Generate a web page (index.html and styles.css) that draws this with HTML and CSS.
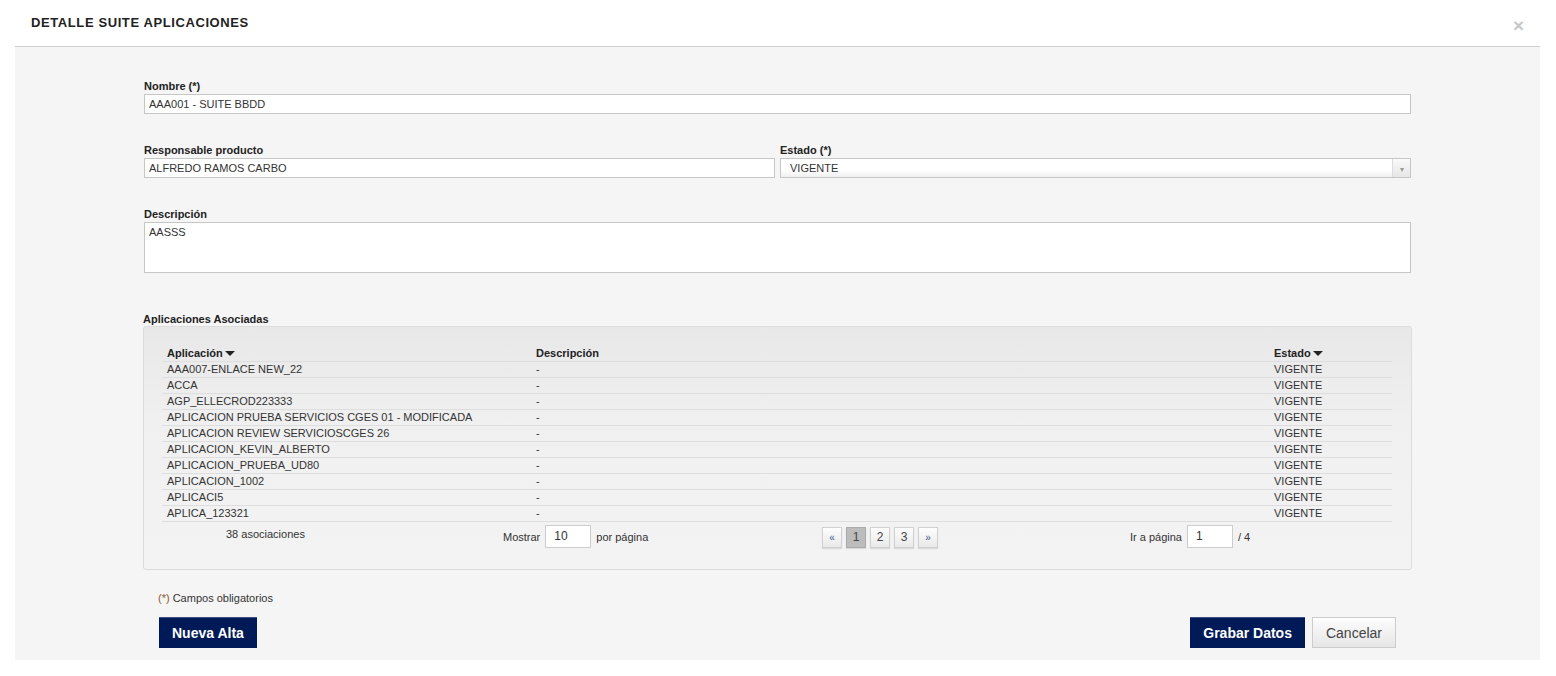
FILE: index.html
```html
<!DOCTYPE html>
<html lang="es">
<head>
    <meta charset="UTF-8">
    <title>Detalle Suite Aplicaciones</title>
    <link rel="stylesheet" href="styles.css">
</head>
<body>

    <div class="dialog">
        <!-- Cabecera -->
        <div class="dialog-header">
            <h1>DETALLE SUITE APLICACIONES</h1>
            <span class="close">&times;</span>
        </div>

        <!-- Cuerpo -->
        <div class="dialog-body">
            <div class="form">
                <div class="field">
                    <label>Nombre (*)</label>
                    <div class="input">AAA001 - SUITE BBDD</div>
                </div>

                <div class="field-row">
                    <div class="field">
                        <label>Responsable producto</label>
                        <div class="input">ALFREDO RAMOS CARBO</div>
                    </div>
                    <div class="field">
                        <label>Estado (*)</label>
                        <div class="select">
                            <span>VIGENTE</span>
                            <span class="select-arrow">&#9662;</span>
                        </div>
                    </div>
                </div>

                <div class="field field-desc">
                    <label>Descripción</label>
                    <div class="textarea">AASSS</div>
                </div>

                <div class="section-title">Aplicaciones Asociadas</div>
                <div class="panel">
                    <table class="grid">
                        <thead>
                            <tr>
                                <th class="col-app">Aplicación <span class="sort"></span></th>
                                <th class="col-desc">Descripción</th>
                                <th class="col-estado">Estado <span class="sort"></span></th>
                            </tr>
                        </thead>
                        <tbody id="rows"></tbody>
                    </table>

                    <div class="grid-footer">
                        <div class="total">38 asociaciones</div>
                        <div class="per-page">Mostrar <span class="small-input">10</span> por página</div>
                        <div class="pager">
                            <span class="page">&laquo;</span>
                            <span class="page active">1</span>
                            <span class="page">2</span>
                            <span class="page">3</span>
                            <span class="page">&raquo;</span>
                        </div>
                        <div class="goto">Ir a página <span class="small-input">1</span> / 4</div>
                    </div>
                </div>

                <div class="note"><span class="req">(*)</span> Campos obligatorios</div>

                <div class="buttons">
                    <button class="btn primary">Nueva Alta</button>
                    <div class="btn-group">
                        <button class="btn primary">Grabar Datos</button>
                        <button class="btn secondary">Cancelar</button>
                    </div>
                </div>
            </div>
        </div>
    </div>

    <script>
        const apps = [
            'AAA007-ENLACE NEW_22',
            'ACCA',
            'AGP_ELLECROD223333',
            'APLICACION PRUEBA SERVICIOS CGES 01 - MODIFICADA',
            'APLICACION REVIEW SERVICIOSCGES 26',
            'APLICACION_KEVIN_ALBERTO',
            'APLICACION_PRUEBA_UD80',
            'APLICACION_1002',
            'APLICACI5',
            'APLICA_123321'
        ];

        const tbody = document.getElementById('rows');
        apps.forEach(name => {
            const tr = document.createElement('tr');
            tr.innerHTML = `<td>${name}</td><td>-</td><td>VIGENTE</td>`;
            tbody.appendChild(tr);
        });
    </script>

</body>
</html>
```

FILE: styles.css
```css
body, html {
    margin: 0;
    padding: 0;
    font-family: "Liberation Sans", Arial, sans-serif;
    font-size: 11px;
    color: #333;
    background-color: #fff;
}

/* Ventana del dialogo */
.dialog {
    margin: 0 16px 0 15px;
}

.dialog-header {
    height: 46px;
    border-bottom: 1px solid #cfcfcf;
    display: flex;
    align-items: center;
    justify-content: space-between;
}

.dialog-header h1 {
    margin: 0 0 1px 16px;
    font-size: 13px;
    font-weight: bold;
    color: #222;
    letter-spacing: 0.6px;
}

.close {
    color: #c8c8c8;
    font-size: 19px;
    font-weight: bold;
    margin: 5px 16px 0 0;
}

.dialog-body {
    background-color: #f5f5f5;
    padding: 32px 129px 12px 129px;
}

/* Campos */
.field {
    margin-bottom: 29px;
}

.field label {
    display: block;
    font-weight: bold;
    line-height: 14px;
    margin-bottom: 1px;
    color: #222;
}

.input, .select, .textarea {
    background-color: #fff;
    border: 1px solid #c6c6c6;
    height: 18px;
    line-height: 18px;
    padding: 0 4px;
    color: #333;
}

.field-row {
    display: flex;
    gap: 5px;
}

.field-row .field {
    flex: 1;
}

.field-row .field:first-child {
    flex: 0 0 631px;
}

.select {
    display: flex;
    justify-content: space-between;
    padding: 0 0 0 9px;
    background: linear-gradient(#fff, #fff 60%, #f0f0f0);
}

.select-arrow {
    width: 17px;
    text-align: center;
    color: #999;
    font-size: 8px;
    border-left: 1px solid #ddd;
    background: linear-gradient(#fafafa, #e6e6e6);
    line-height: 22px;
}

.textarea {
    height: 47px;
    line-height: 16px;
    padding: 1px 4px;
}

.field-desc {
    margin-bottom: 39px;
}

/* Tabla de aplicaciones */
.section-title {
    font-weight: bold;
    line-height: 14px;
    color: #222;
    margin-left: -1px;
}

.panel {
    margin: 0 -1px;
    border: 1px solid #dcdcdc;
    border-radius: 3px;
    background: linear-gradient(#e8e8e8, #f0f0f0 40%, #f3f3f3);
    padding: 19px 19px 21px 18px;
}

.grid {
    width: 100%;
    border-collapse: collapse;
}

.grid th, .grid td {
    text-align: left;
    padding: 0 5px;
    height: 15px;
    line-height: 15px;
    border-bottom: 1px solid #dedede;
    white-space: nowrap;
}

.grid th {
    font-weight: bold;
    color: #222;
}

.col-app {
    width: 359px;
}

.col-estado {
    width: 113px;
}

.sort {
    display: inline-block;
    width: 0;
    height: 0;
    border-left: 5px solid transparent;
    border-right: 5px solid transparent;
    border-top: 5px solid #222;
    vertical-align: 1px;
    margin-left: -1px;
}

.grid-footer {
    display: grid;
    grid-template-columns: 341px 319px 308px 1fr;
    align-items: start;
    padding-top: 3px;
}

.total {
    padding: 3px 0 0 64px;
}

.per-page, .goto {
    display: flex;
    align-items: center;
    gap: 5px;
}

.small-input {
    display: inline-block;
    width: 36px;
    height: 21px;
    line-height: 21px;
    padding-left: 8px;
    background-color: #fff;
    border: 1px solid #ccc;
    font-size: 12px;
}

.pager {
    display: flex;
    gap: 4px;
    padding-top: 2px;
}

.page {
    width: 18px;
    height: 19px;
    line-height: 19px;
    text-align: center;
    border: 1px solid #d0d0d0;
    background: linear-gradient(#fdfdfd, #e9e9e9);
    box-shadow: 0 1px 1px rgba(0, 0, 0, 0.1);
    font-size: 12px;
    color: #444;
}

.page:first-child, .page:last-child {
    font-size: 10px;
    color: #3a5a8a;
}

.page.active {
    background: #bcbcbc;
    border-color: #aaa;
}

/* Pie */
.note {
    margin: 21px 0 0 14px;
    line-height: 14px;
}

.req {
    color: #8a5a2c;
}

.buttons {
    display: flex;
    justify-content: space-between;
    padding: 12px 15px 0 15px;
}

.btn-group {
    display: flex;
    gap: 7px;
}

.btn {
    font-family: "Liberation Sans", Arial, sans-serif;
    height: 31px;
    padding: 0 13px;
    font-size: 14px;
    cursor: pointer;
}

.btn.primary {
    background-color: #001a57;
    border: none;
    border-top: 1px solid #3b4f80;
    color: #fff;
    font-weight: bold;
}

.btn.secondary {
    background: linear-gradient(#fdfdfd, #e6e6e6);
    border: 1px solid #ccc;
    color: #444;
    padding: 0 13px;
}
```
